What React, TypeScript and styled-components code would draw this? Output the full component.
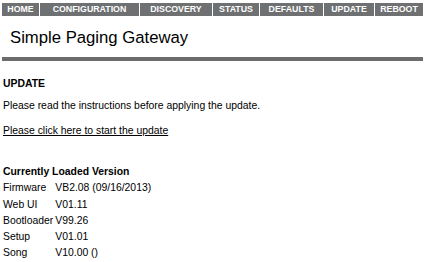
import React from 'react'
import styled, { createGlobalStyle } from 'styled-components'

const GlobalStyle = createGlobalStyle`
  body {
    margin: 0;
    background: #fff;
    color: #000;
    font-family: "Liberation Sans", Arial, Helvetica, sans-serif;
  }
`

const Page = styled.div`
  padding: 3px 2px 0 2px;
  width: 421px;
`

const NavBar = styled.div`
  display: flex;
  gap: 1px;
  height: 13px;
`

const NavItem = styled.a<{ w: number }>`
  width: ${p => p.w}px;
  flex: none;
  background: #6e7072;
  color: #fff;
  font-size: 8.8px;
  font-weight: 700;
  line-height: 13px;
  text-align: center;
  text-decoration: none;
  cursor: pointer;
`

const Title = styled.h1`
  margin: 0;
  padding: 11px 0 0 8px;
  height: 30px;
  font-size: 16.7px;
  font-weight: 400;
  line-height: 22px;
`

const Rule = styled.div`
  height: 4px;
  background: #6c6c6c;
`

const Content = styled.div`
  padding: 16px 0 0 1px;
  font-size: 10.4px;
  line-height: 13px;
`

const Heading = styled.div`
  font-weight: 700;
`

const Para = styled.p<{ top: number }>`
  margin: ${p => p.top}px 0 0 0;
`

const Link = styled.a`
  color: #000;
  text-decoration: underline;
  cursor: pointer;
`

const VersionTable = styled.table`
  margin-top: 27px;
  border-collapse: collapse;
  font-size: 10.4px;
  td, th {
    padding: 0;
    height: 16.3px;
    line-height: 16.3px;
    text-align: left;
    white-space: nowrap;
  }
  th {
    font-weight: 700;
  }
  td:first-child {
    padding-right: 2px;
  }
`

const tabs = [
  { label: 'HOME', w: 37 },
  { label: 'CONFIGURATION', w: 99 },
  { label: 'DISCOVERY', w: 72 },
  { label: 'STATUS', w: 46 },
  { label: 'DEFAULTS', w: 63 },
  { label: 'UPDATE', w: 50 },
  { label: 'REBOOT', w: 48 },
]

const versions = [
  ['Firmware', 'VB2.08 (09/16/2013)'],
  ['Web UI', 'V01.11'],
  ['Bootloader', 'V99.26'],
  ['Setup', 'V01.01'],
  ['Song', 'V10.00 ()'],
]

export default function App() {
  return (
    <>
      <GlobalStyle />
      <Page>
        <NavBar>
          {tabs.map(t => (
            <NavItem key={t.label} w={t.w}>{t.label}</NavItem>
          ))}
        </NavBar>
        <Title>Simple Paging Gateway</Title>
        <Rule />
        <Content>
          <Heading>UPDATE</Heading>
          <Para top={9}>Please read the instructions before applying the update.</Para>
          <Para top={12}>
            <Link>Please click here to start the update</Link>
          </Para>
          <VersionTable>
            <thead>
              <tr>
                <th colSpan={2}>Currently Loaded Version</th>
              </tr>
            </thead>
            <tbody>
              {versions.map(([k, v]) => (
                <tr key={k}>
                  <td>{k}</td>
                  <td>{v}</td>
                </tr>
              ))}
            </tbody>
          </VersionTable>
        </Content>
      </Page>
    </>
  )
}
